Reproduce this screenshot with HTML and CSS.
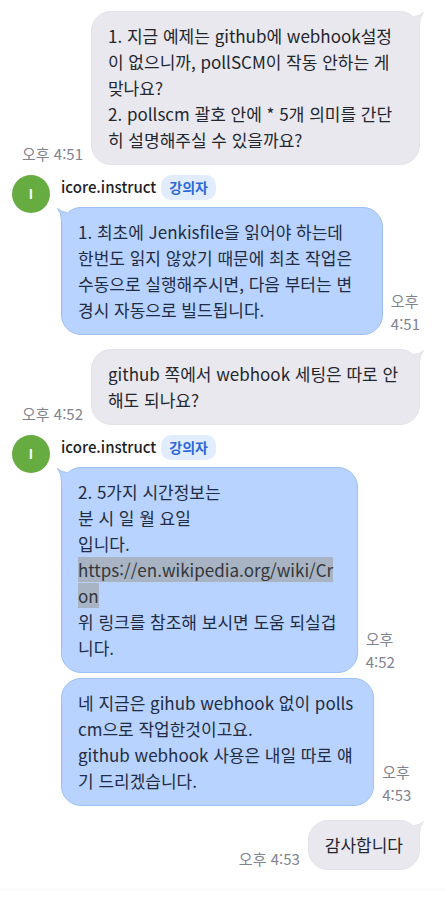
FILE: index.html
```html
<!DOCTYPE html>
<html lang="ko">
<head>
<meta charset="utf-8">
<meta name="viewport" content="width=device-width, initial-scale=1">
<title>채팅</title>
<link rel="stylesheet" href="styles.css">
</head>
<body>
<main class="chat">
  <div class="row row-user">
    <time class="time">오후 4:51</time>
    <div class="bubble bubble-user"><svg class="tail tail-user" viewBox="0 0 16 24" aria-hidden="true"><path class="tail-fill" d="M5 5.5 Q10 5.5 14.5 1.5 Q10.5 6 10.5 14 V21 H3 V6Z"/><path class="tail-line" d="M5 5.5 Q10 5.5 14.5 1.5 Q10.5 6 10.5 14 V21"/></svg>1. 지금 예제는 github에 webhook설정이 없으니까, pollSCM이 작동 안하는 게 맞나요?<br>2. pollscm 괄호 안에 * 5개 의미를 간단히 설명해주실 수 있을까요?</div>
  </div>

  <section class="agent">
    <div class="avatar">I</div>
    <div class="agent-body">
      <header class="agent-head"><span class="name">icore.instruct</span><span class="badge">강의자</span></header>
      <div class="row">
        <div class="bubble bubble-agent"><svg class="tail tail-agent" viewBox="0 0 16 24" aria-hidden="true"><path class="tail-fill" d="M11 5.5 Q6 5.5 1.5 1.5 Q5.5 6 5.5 14 V21 H13 V6Z"/><path class="tail-line" d="M11 5.5 Q6 5.5 1.5 1.5 Q5.5 6 5.5 14 V21"/></svg>1. 최초에 Jenkisfile을 읽어야 하는데<br>한번도 읽지 않았기 때문에 최초 작업은 수동으로 실행해주시면, 다음 부터는 변경시 자동으로 빌드됩니다.</div>
        <time class="time">오후 4:51</time>
      </div>
    </div>
  </section>

  <div class="row row-user">
    <time class="time">오후 4:52</time>
    <div class="bubble bubble-user"><svg class="tail tail-user" viewBox="0 0 16 24" aria-hidden="true"><path class="tail-fill" d="M5 5.5 Q10 5.5 14.5 1.5 Q10.5 6 10.5 14 V21 H3 V6Z"/><path class="tail-line" d="M5 5.5 Q10 5.5 14.5 1.5 Q10.5 6 10.5 14 V21"/></svg>github 쪽에서 webhook 세팅은 따로 안해도 되나요?</div>
  </div>

  <section class="agent">
    <div class="avatar">I</div>
    <div class="agent-body">
      <header class="agent-head"><span class="name">icore.instruct</span><span class="badge">강의자</span></header>
      <div class="row">
        <div class="bubble bubble-agent"><svg class="tail tail-agent" viewBox="0 0 16 24" aria-hidden="true"><path class="tail-fill" d="M11 5.5 Q6 5.5 1.5 1.5 Q5.5 6 5.5 14 V21 H13 V6Z"/><path class="tail-line" d="M11 5.5 Q6 5.5 1.5 1.5 Q5.5 6 5.5 14 V21"/></svg>2. 5가지 시간정보는<br>분 시 일 월 요일<br>입니다.<br><a class="link" href="https://en.wikipedia.org/wiki/Cron">https://en.wikipedia.org/wiki/Cron</a><br>위 링크를 참조해 보시면 도움 되실겁니다.</div>
        <time class="time">오후 4:52</time>
      </div>
      <div class="row">
        <div class="bubble bubble-agent">네 지금은 gihub webhook 없이 pollscm으로 작업한것이고요.<br>github webhook 사용은 내일 따로 얘기 드리겠습니다.</div>
        <time class="time">오후 4:53</time>
      </div>
    </div>
  </section>

  <div class="row row-user">
    <time class="time">오후 4:53</time>
    <div class="bubble bubble-user"><svg class="tail tail-user" viewBox="0 0 16 24" aria-hidden="true"><path class="tail-fill" d="M5 5.5 Q10 5.5 14.5 1.5 Q10.5 6 10.5 14 V21 H3 V6Z"/><path class="tail-line" d="M5 5.5 Q10 5.5 14.5 1.5 Q10.5 6 10.5 14 V21"/></svg>감사합니다</div>
  </div>
</main>
</body>
</html>
```
FILE: styles.css
```css
* {
  box-sizing: border-box;
}

body {
  margin: 0;
  background: #fff;
  color: #24262e;
  font-family: "Noto Sans CJK KR", "Noto Sans", sans-serif;
  font-size: 17px;
  line-height: 26px;
}

.chat {
  padding: 11px 26px 19px 12px;
  border-bottom: 1px solid #f8f8fa;
}

.row {
  display: flex;
  align-items: flex-end;
  gap: 8px;
}

.row-user {
  justify-content: flex-end;
  padding-left: 10px;
}

.row-user .time {
  flex: none;
}

.bubble {
  position: relative;
  min-width: 0;
  padding: 11px 16px;
  border: 1px solid;
  border-radius: 20px;
  word-break: break-all;
}

.bubble-user {
  background: #e9e8ee;
  border-color: #e3e2e9;
}

.bubble-agent {
  background: #b8d3ff;
  border-color: #9dc0f0;
  color: #1f2c43;
}

.tail {
  position: absolute;
  top: -1px;
  width: 16px;
  height: 24px;
}

.tail-user {
  right: -6px;
}

.tail-agent {
  left: -6px;
}

.tail-line {
  fill: none;
  stroke-width: 1;
}

.tail-user .tail-fill {
  fill: #e9e8ee;
}

.tail-user .tail-line {
  stroke: #e3e2e9;
}

.tail-agent .tail-fill {
  fill: #b8d3ff;
}

.tail-agent .tail-line {
  stroke: #9dc0f0;
}

.time {
  color: #81838f;
  font-size: 15px;
  line-height: 23px;
  word-break: keep-all;
}

.agent {
  display: flex;
  gap: 11px;
  margin: 10px 0 14px;
}

.avatar {
  flex: none;
  width: 38px;
  height: 38px;
  border-radius: 50%;
  background: #66ac40;
  color: #fff;
  font-size: 13px;
  font-weight: 700;
  line-height: 38px;
  text-align: center;
}

.agent-body {
  flex: 1;
  min-width: 0;
  display: flex;
  flex-direction: column;
  gap: 5px;
}

.agent-head {
  display: flex;
  align-items: flex-start;
  gap: 5px;
  height: 27px;
  color: #1d1e24;
  font-size: 15px;
  line-height: 23px;
}

.name {
  font-weight: 500;
}

.badge {
  padding: 0 8px;
  border-radius: 10px;
  background: #e1edff;
  color: #2c68d8;
  font-size: 14px;
  font-weight: 700;
  line-height: 25px;
}

.link {
  background: #a8b4c3;
  color: #33373d;
  text-decoration: none;
}
```
